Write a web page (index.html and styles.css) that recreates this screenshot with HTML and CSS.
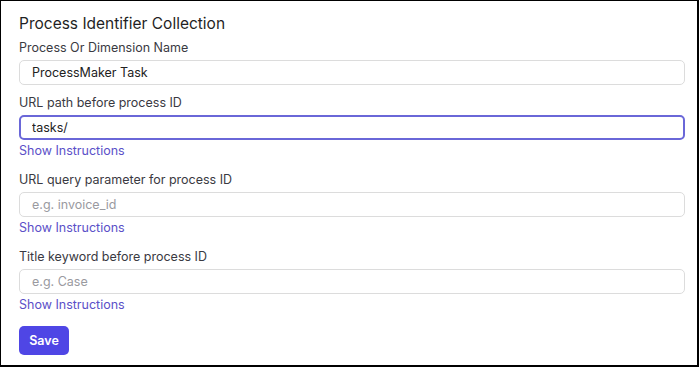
FILE: index.html
```html
<!DOCTYPE html>
<html lang="en">
<head>
  <meta charset="UTF-8">
  <title>Process Identifier Collection</title>
  <link rel="stylesheet" href="styles.css">
</head>
<body>
  <div class="panel">
    <h2 class="panel-title">Process Identifier Collection</h2>

    <form class="pid-form">
      <div class="field">
        <label class="field-label">Process Or Dimension Name</label>
        <input type="text" class="field-input" value="ProcessMaker Task">
      </div>

      <div class="field">
        <label class="field-label">URL path before process ID</label>
        <input type="text" class="field-input focused" value="tasks/">
        <a href="#" class="field-help">Show Instructions</a>
      </div>

      <div class="field">
        <label class="field-label">URL query parameter for process ID</label>
        <input type="text" class="field-input" placeholder="e.g. invoice_id">
        <a href="#" class="field-help">Show Instructions</a>
      </div>

      <div class="field">
        <label class="field-label">Title keyword before process ID</label>
        <input type="text" class="field-input" placeholder="e.g. Case">
        <a href="#" class="field-help">Show Instructions</a>
      </div>

      <button type="button" class="save-button">Save</button>
    </form>
  </div>
</body>
</html>
```

FILE: styles.css
```css
* { margin:0; padding:0; box-sizing:border-box; font-family:Inter,'Noto Sans',sans-serif; }
body { background:#fff; }

.panel {
  width:699px; height:367px;
  border:1px solid #000; border-right-width:2px; border-bottom-width:2px;
  padding:13px 12px 0 18px;
}
.panel-title {
  font-size:15.5px; font-weight:400; color:#1f1f24;
  line-height:20px; margin-bottom:6px;
}

.pid-form { display:flex; flex-direction:column; }
.field { display:flex; flex-direction:column; margin-bottom:10px; }
.field:has(.field-help) { margin-bottom:13px; }

.field-label {
  font-size:12.5px; color:#3a3a42; line-height:16px; margin-bottom:4px;
}
.field-input {
  height:25px; width:666px; padding:0 12px;
  border:1px solid #dcdcdc; border-radius:5px;
  font-size:12.5px; color:#222; background:#fff; outline:none;
}
.field-input::placeholder { color:#9a9a9f; }
.field-input.focused { border:2px solid #6a67d8; padding:0 11px; }

.field-help {
  font-size:12.5px; line-height:16px; color:#5b50c8;
  text-decoration:none; margin-top:3px; align-self:flex-start;
}

.save-button {
  align-self:flex-start; margin-top:0;
  width:50px; height:29px; border:none; border-radius:5px;
  background:#4f46e5; color:#fff; font-size:12.5px; font-weight:600;
  cursor:pointer;
}
```
